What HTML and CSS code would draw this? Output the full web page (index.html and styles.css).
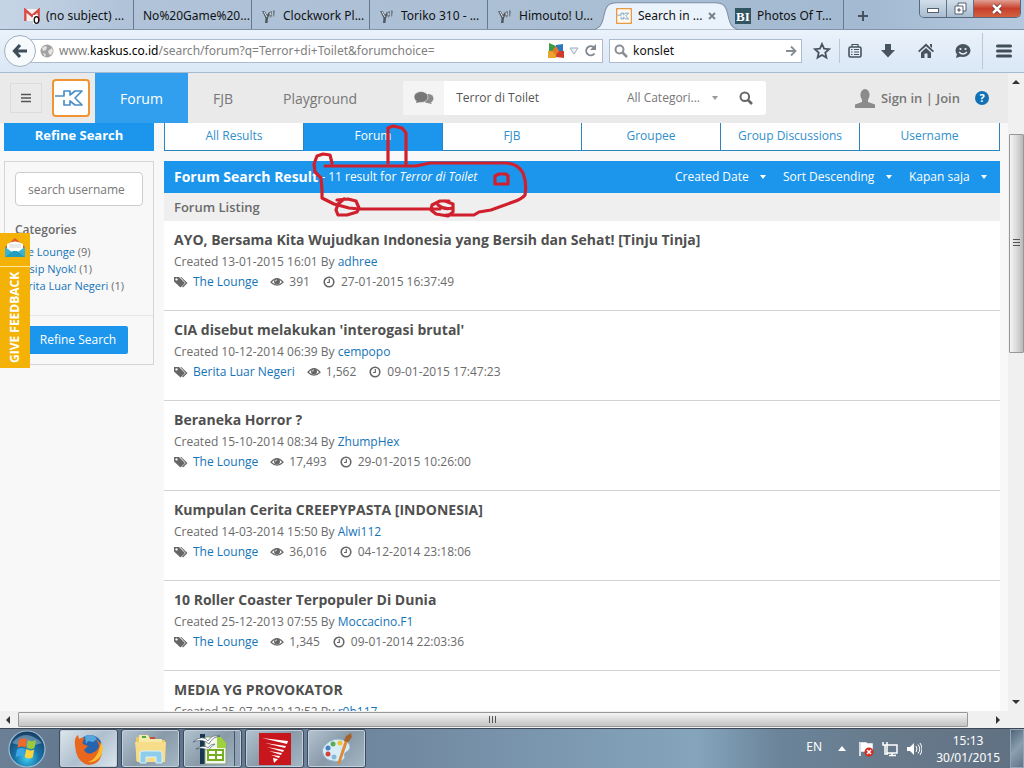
FILE: index.html
```html
<!DOCTYPE html>
<html lang="id">
<head>
<meta charset="utf-8">
<title>Search in Forum</title>
<link rel="stylesheet" href="styles.css">
</head>
<body>
<svg class="defs" aria-hidden="true">
  <symbol id="tags" viewBox="0 0 14 14"><path fill="currentColor" fill-rule="evenodd" d="M0 2h5l6 6-4.500 4.500L0 6.500zM2.500 3.200a1.200 1.200 0 1 0 .01 0zM6.200 2h1L13.500 8 9 12.500l-.9-.9L11.700 8z"/></symbol>
  <symbol id="eye" viewBox="0 0 14 14"><path fill="none" stroke="currentColor" stroke-width="1.200" d="M1 7.200Q7 .2 13 7.200 7 13 1 7.200z"/><circle cx="7" cy="6.600" r="3" fill="currentColor"/><path d="M5.300 6.500Q5.400 5 7 4.900" fill="none" stroke="#fff" stroke-width=".8"/></symbol>
  <symbol id="clock" viewBox="0 0 14 14"><circle cx="7" cy="7" r="4.800" fill="none" stroke="currentColor" stroke-width="1.600"/><path d="M7.300 4v3.500H5" fill="none" stroke="currentColor" stroke-width="1.200"/></symbol>
  <symbol id="flagicon" viewBox="0 0 16 16"><path d="M1 3l3 .5 2 3.500 2-3 1 2-2 4-.5 5H4l.5-5z" fill="#4f5860"/><path d="M8 4l3-1v5l-2 2zM12 2l2 1-1 6-1-1z" fill="#76808a"/><path d="M3 4l3 5M9 5l1 2" stroke="#e2e7ec" stroke-width="1"/></symbol>
  <symbol id="klogo" viewBox="0 0 38 38"><path d="M3 17h9v-5h6v4l5-4h7l-7 7 7 7h-7l-5-4v4h-6v-5" fill="none" stroke="#4a8fc7" stroke-width="1.700" stroke-linejoin="round"/></symbol>
</svg>

<div class="tabstrip">
  <button class="tab"><svg class="fav" viewBox="0 0 16 16"><path d="M0 1h16v12H0z" fill="#f4eeee"/><path d="M1.300 13V2L8 8l6.700-6v11" fill="none" stroke="#d84a43" stroke-width="2.400"/><path d="M9 7h5v9H9z" fill="#fff"/><ellipse cx="12.500" cy="12" rx="2.300" ry="3.300" fill="#fff" stroke="#111" stroke-width="1.300"/></svg><span>(no subject) ...</span></button>
  <button class="tab"><span>No%20Game%20...</span></button>
  <button class="tab"><svg class="fav"><use href="#flagicon"/></svg><span>Clockwork Pl...</span></button>
  <button class="tab"><svg class="fav"><use href="#flagicon"/></svg><span>Toriko 310 - ...</span></button>
  <button class="tab nosep"><svg class="fav"><use href="#flagicon"/></svg><span>Himouto! U...</span></button>
  <button class="tab active">
    <svg class="tabshape" viewBox="0 0 148 30" preserveAspectRatio="none"><path d="M0 30C8 29 10 25 12 17S16 6 25 6H123C132 6 134 9 136 17S140 29 148 30z" fill="#eaf2fb" stroke="#7e8fa4"/></svg>
    <svg class="fav" viewBox="0 0 38 38"><rect x="1" y="1" width="36" height="36" rx="4" fill="#fff8ee" stroke="#e99a45" stroke-width="4"/><use href="#klogo"/></svg><span>Search in ...</span><svg class="tabclose" viewBox="0 0 8 8"><path d="M1 1l6 6M7 1L1 7" stroke="#7a828c" stroke-width="2"/></svg></button>
  <button class="tab"><svg class="fav" viewBox="0 0 16 16"><path fill="#315463" d="M0 0h16v16H0z"/><text class="bi" x="1" y="13">BI</text></svg><span>Photos Of T...</span></button>
  <button class="newtab" aria-label="New tab"><svg width="12" height="12"><path d="M6 1v10M1 6h10" stroke="#46525f" stroke-width="2"/></svg></button>
  <div class="winctl">
    <button aria-label="Minimize"><svg width="12" height="12"><rect x=".5" y="5.500" width="11" height="4" fill="#fff" stroke="#526070"/></svg></button>
    <button aria-label="Restore"><svg width="13" height="13"><path d="M4 1h8v8H4z" fill="#fff" stroke="#526070"/><path d="M1 4h8v8H1z" fill="#fff" stroke="#526070"/><path d="M4 7h2v2H4z" fill="#bccada" stroke="#526070"/></svg></button>
    <button class="close" aria-label="Close"><svg width="14" height="12"><path d="M3 2l8 8M11 2l-8 8" stroke="#6b2a2a" stroke-width="4"/><path d="M3 2l8 8M11 2l-8 8" stroke="#fff" stroke-width="2.500"/></svg></button>
  </div>
</div>

<div class="navbar">
  <button class="back" aria-label="Back"><svg width="16" height="16"><path d="M8 2L2.500 8 8 14M3 8h12" fill="none" stroke="#3f4c59" stroke-width="3.200"/></svg></button>
  <div class="urlbox">
    <svg width="14" height="14"><circle cx="7" cy="7" r="6.500" fill="#a2a2a2"/><path d="M2 4l3-2 2 1-1 3-3 1zM8 7l4-3 1 3-2 4-2-1zM3 9l3 1-1 3z" fill="#e4e4e4"/></svg>
    <div class="url" role="textbox" aria-label="Address" contenteditable="true" spellcheck="false">www.<b>kaskus.co.id</b>/search/forum?q=Terror+di+Toilet&amp;forumchoice=</div>
    <svg width="16" height="16"><path d="M1 0l7 3v5H1z" fill="#3d9b48"/><path d="M8 2l7-1v7H8z" fill="#2a78bf"/><path d="M0 8h8v7H0z" fill="#e9a52c"/><path d="M8 8h8v7l-8-1z" fill="#cf3c29"/><path d="M4 8l4-5 3 5-3 4z" fill="#e8792c"/></svg>
    <svg class="drop" width="10" height="8"><path d="M1 1h8L5 7z" fill="#eef3fa" stroke="#9fabba"/></svg>
    <button aria-label="Reload"><svg width="13" height="13"><path d="M10.500 9.500A4.600 4.600 0 1 1 9.500 3" fill="none" stroke="#808891" stroke-width="2"/><path d="M12 0v6H6z" fill="#808891"/></svg></button>
  </div>
  <div class="searchbox">
    <svg width="14" height="14"><circle cx="5.500" cy="5.500" r="4" fill="none" stroke="#8a8f95" stroke-width="2"/><path d="M8.500 8.500l4.500 4.500" stroke="#8a8f95" stroke-width="2.500"/></svg>
    <input type="text" aria-label="Web search" value="konslet">
    <button aria-label="Go"><svg width="12" height="12"><path d="M1 6h9M6 1.500L10.500 6 6 10.500" fill="none" stroke="#858c94" stroke-width="1.800"/></svg></button>
  </div>
  <div class="tools">
    <button class="star" aria-label="Bookmark"><svg width="18" height="18"><path d="M9 2l2.100 4.700 5 .5-3.800 3.400 1.100 5L9 13l-4.400 2.600 1.100-5L1.900 7.200l5-.5z" fill="none" stroke="#47535f" stroke-width="1.800"/></svg></button>
    <button class="list" aria-label="Bookmarks list"><svg width="16" height="18"><rect x="2" y="5" width="12" height="10" rx="1.500" fill="none" stroke="#47535f" stroke-width="1.600"/><path d="M5 5V2.500h6V5M4 7.500h1.500M7 7.500h5M4 10h1.500M7 10h5M4 12.500h1.500M7 12.500h5" fill="none" stroke="#47535f" stroke-width="1.200"/></svg></button>
    <button aria-label="Downloads"><svg width="16" height="18"><path d="M5 2h6v6h4l-7 7.500L1 8h4z" fill="#47535f"/></svg></button>
    <button aria-label="Home"><svg width="18" height="18"><path d="M9 1.500L17 9l-1.200 1.300L9 4.200l-6.800 6.100L1 9z" fill="#47535f"/><path d="M9 6l5 4.500V16h-3.500v-4.500h-3V16H4v-5.500z" fill="#47535f"/><path d="M13 2h2v4l-2-1.700z" fill="#47535f"/></svg></button>
    <button aria-label="Chat"><svg width="18" height="18"><ellipse cx="9" cy="8.500" rx="7.500" ry="6.500" fill="#47535f"/><path d="M3 12l-1 4 6-2z" fill="#47535f"/><circle cx="6.500" cy="7" r="1.100" fill="#e5eef8"/><circle cx="11.500" cy="7" r="1.100" fill="#e5eef8"/><path d="M5 10q4 4 8 0" fill="none" stroke="#e5eef8" stroke-width="1.300"/></svg></button>
    <button class="menu" aria-label="Menu"><svg width="16" height="14"><path d="M1.500 2h13M1.500 7h13M1.500 12h13" stroke="#414d59" stroke-width="3" stroke-linecap="round"/></svg></button>
  </div>
</div>

<div class="viewport">
  <div class="page">
    <header class="site">
      <button class="burger" aria-label="Menu"><svg width="10" height="10"><path d="M0 1.500h10M0 5h10M0 8.500h10" stroke="#555" stroke-width="1.400"/></svg></button>
      <a class="logo" href="#" aria-label="Home"><svg width="34" height="34" viewBox="2 2 34 34"><use href="#klogo" width="38" height="38"/></svg></a>
      <nav class="mainnav"><a class="on" href="#">Forum</a><a href="#">FJB</a><a href="#">Playground</a></nav>
      <form class="sitesearch">
        <span class="chat"><svg width="20" height="14"><ellipse cx="14" cy="7.500" rx="5.500" ry="4.500" fill="#8a8a8a"/><path d="M16 10l2 3-5-1z" fill="#8a8a8a"/><ellipse cx="7" cy="6" rx="7" ry="5.500" fill="#777" stroke="#f4f4f4" stroke-width=".6"/><path d="M3 9l-1 3 4-1z" fill="#777"/></svg></span>
        <input type="text" aria-label="Search" value="Terror di Toilet">
        <span class="pick"><select aria-label="Category"><option>All Categori...</option></select></span>
        <button type="button" aria-label="Search"><svg width="14" height="14"><circle cx="5.800" cy="5.800" r="4.300" fill="none" stroke="#666" stroke-width="2"/><path d="M9 9l4 4" stroke="#666" stroke-width="2.500"/></svg></button>
      </form>
      <div class="account"><svg width="22" height="19"><ellipse cx="11" cy="6" rx="4.600" ry="6" fill="#8b8b8b"/><path d="M8 9h6v4l7 2.500V19H1v-3.500L8 13z" fill="#8b8b8b"/></svg><a href="#">Sign in | Join</a></div>
      <a class="help" href="#" aria-label="Help"><svg width="14" height="14"><circle cx="7" cy="7" r="7" fill="#1271b5"/><text x="7" y="11" text-anchor="middle">?</text></svg></a>
    </header>

    <div class="cols">
      <aside class="side">
        <h2 class="sidehead">Refine Search</h2>
        <form class="refine">
          <div class="filters">
            <input type="text" aria-label="Username" placeholder="search username">
            <h3>Categories</h3>
            <ul>
              <li><a href="#">The Lounge</a> (9)</li>
              <li><a href="#">Gosip Nyok!</a> (1)</li>
              <li><a href="#">Berita Luar Negeri</a> (1)</li>
            </ul>
          </div>
          <div class="submit"><button type="button">Refine Search</button></div>
        </form>
      </aside>
      <main class="main">
        <nav class="kinds"><a href="#">All Results</a><a class="on" href="#">Forum</a><a href="#">FJB</a><a href="#">Groupee</a><a href="#">Group Discussions</a><a href="#">Username</a></nav>
        <div class="resulthead">
          <h1>Forum Search Result</h1><p>- 11 result for <i>Terror di Toilet</i></p>
          <div class="sorts">
            <span class="pick"><select aria-label="Sort by"><option>Created Date</option></select></span>
            <span class="pick"><select aria-label="Order"><option>Sort Descending</option></select></span>
            <span class="pick"><select aria-label="Period"><option>Kapan saja</option></select></span>
          </div>
        </div>
        <h2 class="listing">Forum Listing</h2>
        <article><h3>AYO, Bersama Kita Wujudkan Indonesia yang Bersih dan Sehat! [Tinju Tinja]</h3><p>Created 13-01-2015 16:01 By <a href="#">adhree</a></p><div class="meta"><svg><use href="#tags"/></svg><a href="#">The Lounge</a><svg><use href="#eye"/></svg><span>391</span><svg><use href="#clock"/></svg><span>27-01-2015 16:37:49</span></div></article>
        <article><h3>CIA disebut melakukan 'interogasi brutal'</h3><p>Created 10-12-2014 06:39 By <a href="#">cempopo</a></p><div class="meta"><svg><use href="#tags"/></svg><a href="#">Berita Luar Negeri</a><svg><use href="#eye"/></svg><span>1,562</span><svg><use href="#clock"/></svg><span>09-01-2015 17:47:23</span></div></article>
        <article><h3>Beraneka Horror ?</h3><p>Created 15-10-2014 08:34 By <a href="#">ZhumpHex</a></p><div class="meta"><svg><use href="#tags"/></svg><a href="#">The Lounge</a><svg><use href="#eye"/></svg><span>17,493</span><svg><use href="#clock"/></svg><span>29-01-2015 10:26:00</span></div></article>
        <article><h3>Kumpulan Cerita CREEPYPASTA [INDONESIA]</h3><p>Created 14-03-2014 15:50 By <a href="#">Alwi112</a></p><div class="meta"><svg><use href="#tags"/></svg><a href="#">The Lounge</a><svg><use href="#eye"/></svg><span>36,016</span><svg><use href="#clock"/></svg><span>04-12-2014 23:18:06</span></div></article>
        <article><h3>10 Roller Coaster Terpopuler Di Dunia</h3><p>Created 25-12-2013 07:55 By <a href="#">Moccacino.F1</a></p><div class="meta"><svg><use href="#tags"/></svg><a href="#">The Lounge</a><svg><use href="#eye"/></svg><span>1,345</span><svg><use href="#clock"/></svg><span>09-01-2014 22:03:36</span></div></article>
        <article><h3>MEDIA YG PROVOKATOR</h3><p>Created 25-07-2013 12:52 By <a href="#">r0b117</a></p></article>
      </main>
    </div>

    <button class="feedback"><svg width="20" height="22"><path d="M0 9l10-9 10 9v10H0z" fill="#e05a2b"/><path d="M2 6q8-5 16 0v8H2z" fill="#fff"/><path d="M4 7h12M4 9h12" stroke="#d3d3d3"/><path d="M0 9l10 7 10-7v10H0z" fill="#39b4d3"/><path d="M0 19l8-6h4l8 6z" fill="#279dbd"/></svg><span>GIVE FEEDBACK</span></button>

    <svg class="scribble" width="220" height="96" viewBox="308 124 220 96" fill="none" stroke="#d0202e" stroke-width="3.200" stroke-linejoin="round" stroke-linecap="round">
      <path d="M388 163V128l5-2 9 2 4 5v31"/>
      <path d="M325 166h91l14-3h76q12 1 17 10 4 10 2 22-3 4-12 7l-22 8-12 2-5 3h-28M440 209h-81l-10-1-15-4-12-6v-8l-1-12-6-6-1-8 3-8 6-2 7 1 2 8"/>
      <path d="M337 200l11-1 8 2 3 7-2 4-10 3h-9l-2-5 2-6 6-5"/>
      <path d="M449 201h-9l-8 4-1 5 5 4 12 2 5-4v-8l-8-3M438 205q6 5 14 3"/>
      <path d="M495 184v-8l4-2h7l2 2v8z"/>
    </svg>
  </div>
  <div class="vscroll"><i class="up"></i><div class="vthumb"><i></i></div><i class="down"></i></div>
</div>
<div class="hscroll"><i class="left"></i><div class="hthumb"><i></i></div><i class="right"></i><span class="corner"></span></div>

<footer class="taskbar">
  <button class="orb" aria-label="Start"><svg width="40" height="40"><defs><radialGradient id="og" cx=".5" cy=".75" r=".75"><stop offset="0" stop-color="#3fd0f2"/><stop offset=".45" stop-color="#1872a8"/><stop offset="1" stop-color="#173b5e"/></radialGradient></defs><circle cx="20" cy="20" r="18" fill="url(#og)" stroke="#9bbad0" stroke-width="1.200"/><path d="M5 14Q18-2 35 14 20 20 5 14z" fill="#fff" opacity=".3"/><path d="M12 11q4-3 8-.5l-1.500 8q-4-2-8 .5z" fill="#f0692c"/><path d="M21 11q4 2.500 8 0l-1.500 8q-4 2-8-.5z" fill="#9bc93b"/><path d="M10 20.500q4-2.500 8-.5l-1.500 8q-4-2-8 .5z" fill="#3ca7e4"/><path d="M19.200 20q4 2.500 8 .5l-1.500 8q-4 2-8-.5z" fill="#fcd33c"/></svg></button>
  <button class="task bright" aria-label="Firefox"><svg width="32" height="32"><circle cx="17" cy="14" r="12" fill="#2764ae"/><path d="M12 3q8-3 12 3l-4 3-5-1-2 3z" fill="#52a7dd"/><path d="M2 12Q1 5 5 2l1 4q3-2 6-1-3 3-2 6l5 2-4 4q3 5 8 3 6-2 7-7-1-5-4-7 7 3 7 11 0 14-13 15Q3 30 2 12z" fill="#e8661e"/><path d="M28 9q4 8-1 15-5 6-12 5 10-3 13-20z" fill="#fbbf34"/></svg></button>
  <button class="task" aria-label="Explorer"><svg width="34" height="32"><path d="M2 4h9l2 3h18v21H2z" fill="#e8c967"/><path d="M5 2h9l2 4h12v6H5z" fill="#f7e9a8"/><path d="M8 3h4v2H8z" fill="#4caa4c"/><path d="M16 4h5v2h-5z" fill="#c54b3b"/><path d="M1 9h31l-1 20H3z" fill="#f7dd8a"/><path d="M6 30V21q0-3 3-3h16q3 0 3 3v9h-6v-6H12v6z" fill="#8fcdec" stroke="#d9f1fc"/></svg></button>
  <button class="task stack" aria-label="OpenOffice"><svg width="36" height="34"><path d="M8 2h5v30H8z" fill="#183650"/><path d="M13 5h15l6 6v21H13z" fill="#f4f8ef" stroke="#8aa37d"/><path d="M25 5h4l5 6v5h-9z" fill="#9fd13c"/><path d="M1 10q10-8 15-1 4-7 12-5-8 1-11 8-6-6-16-2zM4 17q8-5 12-1 2-4 7-4-5 3-7 7-4-4-12-2z" fill="#fff" stroke="#33495b" stroke-width=".6"/><path d="M15 17h17v12H15z" fill="#77ad20"/><path d="M17 19h6v3h-6zM25 19h5v3h-5zM17 24h6v3h-6zM25 24h5v3h-5z" fill="#fff"/></svg></button>
  <button class="task" aria-label="Shaker"><svg width="32" height="32"><path d="M0 0h32v32H0z" fill="#c8161d"/><path d="M3 5l26 3-1 3zM6 10l21 3-1 2zM8 14l17 3-1 2zM10 18l13 2-1 2zM12 22l9 1-1 2zM14 25l5 1-4 4z" fill="#fff"/></svg></button>
  <button class="task" aria-label="Paint"><svg width="34" height="34"><path d="M4 14Q14 3 26 9q7 5 2 10-5 2-3 6-2 6-12 4-8-1-10-7-2-4 1-8z" fill="#d9edf8" stroke="#8cb0c8"/><circle cx="8" cy="16" r="2.500" fill="#4a81c4"/><circle cx="13" cy="12" r="2.500" fill="#5cab50"/><circle cx="20" cy="11" r="2.500" fill="#f1c232"/><circle cx="8" cy="22" r="2.500" fill="#d0453a"/><circle cx="14" cy="25" r="2.500" fill="#83bad9"/><path d="M17 32L25 8l3 1-8 23z" fill="#dc8b3b"/><path d="M24 9l2-5 5-3 1 4-4 5z" fill="#a4632b"/></svg></button>
  <div class="tray">
    <span>EN</span>
    <svg width="8" height="5"><path d="M4 0l4 5H0z" fill="#fff"/></svg>
    <svg width="16" height="16"><path d="M2 1v14M3 2h5l1 1h5v7H3" fill="#fff" stroke="#fff" stroke-width="1.500"/><circle cx="11" cy="11" r="4.500" fill="#d42c20"/><path d="M9 9l4 4M13 9l-4 4" stroke="#fff" stroke-width="1.500"/></svg>
    <svg width="16" height="16"><path d="M5 4h10v8H5zM7 14.500h7M10 12v2M1 1v3h4V1M3 4v9h3" fill="none" stroke="#fff" stroke-width="1.500"/></svg>
    <svg width="16" height="16"><path d="M1 6h3l4-4v12l-4-4H1z" fill="#fff"/><path d="M10 5q2 3 0 6M12 3.500q3.500 4.500 0 9M14 2q4 6 0 12" fill="none" stroke="#fff"/></svg>
    <time>15:13<br>30/01/2015</time>
  </div>
  <button class="showdesk" aria-label="Show desktop"></button>
</footer>
</body>
</html>
```
FILE: styles.css
```css
* { box-sizing: border-box; }
body { margin: 0; height: 100vh; display: flex; flex-direction: column; overflow: hidden; font: 13px/20px "Open Sans", sans-serif; color: #6b6b6b; background: #f8f8f8; }
button, input, select { font: inherit; color: inherit; border: 0; margin: 0; padding: 0; background: none; }
a { color: #1474b8; text-decoration: none; }
h1, h2, h3, p, ul { margin: 0; padding: 0; list-style: none; }
svg { display: block; flex: none; }
.defs { position: absolute; width: 0; height: 0; }

.tabstrip { flex: none; display: flex; height: 30px; padding-left: 15px; background: linear-gradient(90deg, #c6d5e6, #b0c3d9 12%, #a9bdd3 60%, #a3bad2 85%, #b5c9de); border-bottom: 1px solid #8293a8; font: 12px/16px "Noto Sans", sans-serif; color: #111; }
.tab { position: relative; flex: 0 1 118px; display: flex; align-items: center; gap: 6px; padding: 2px 0 0 9px; border-right: 1px solid #64788e; white-space: nowrap; }
.tab:first-child, .tab.nosep, .tab.active { flex-basis: 119px; }
.tab:not(.active) { overflow: hidden; }
.tab.nosep, .tab.active { border-right-color: transparent; }
.tab.active { z-index: 1; height: 30px; }
.tab > * { position: relative; }
.tab .tabshape { position: absolute; left: -15px; top: -4px; width: 148px; height: 34px; }
.fav { width: 16px; height: 16px; }
.tabclose { width: 8px; height: 8px; }
.bi { font: bold 13px "Liberation Serif", serif; fill: #fff; }
.newtab { padding: 2px 13px 0; }
.winctl { display: flex; height: 18px; margin: 0 3px 0 auto; border: 1px solid #56687e; border-top: 0; border-radius: 0 0 5px 5px; overflow: hidden; }
.winctl button { width: 27px; display: grid; place-items: center; background: linear-gradient(#d2deea, #a9bccf); border-right: 1px solid #5f7187; }
.winctl .close { width: 46px; border: 0; background: linear-gradient(#e0a093, #c8402b 50%, #d2603f); }

.navbar { flex: none; display: flex; align-items: center; height: 43px; padding: 0 0 1px 4px; background: linear-gradient(#eaf2fb, #dae7f5); border-bottom: 1px solid #a5b9d0; font: 12px/16px "Noto Sans", sans-serif; color: #111; }
.back { z-index: 1; width: 32px; height: 32px; margin-right: -6px; display: grid; place-items: center; border: 1px solid #a0aebf; border-radius: 50%; background: #f7fafd; }
.urlbox, .searchbox { display: flex; align-items: center; height: 24px; border: 1px solid #acbccd; background: #fff; }
.urlbox { flex: 1; padding: 0 5px 0 9px; gap: 5px; }
.url { flex: 1; min-width: 0; overflow: hidden; white-space: nowrap; color: #808080; outline: 0; }
.url b { font-weight: 400; color: #000; }
.searchbox { width: 193px; margin-left: 6px; padding: 0 4px; gap: 5px; }
.searchbox input { flex: 1; min-width: 0; }
.tools { display: flex; width: 219px; margin-left: 3px; align-items: center; }
.tools button { flex: 1; display: grid; place-items: center; height: 24px; }
.tools .star { flex: 0 0 34px; }
.tools .list { flex: 0 0 30px; border-left: 1px solid #b9c7d7; }
.tools .menu { flex: 0 0 42px; height: 36px; border-left: 1px solid #b9c7d7; }

.viewport { flex: 1; min-height: 0; display: flex; }
.page { position: relative; flex: 1; min-width: 0; overflow: hidden; background: #f8f8f8; }
.site { display: flex; align-items: center; height: 50px; padding-left: 10px; background: #eaeaea; color: #777; }
.burger { width: 32px; height: 30px; display: grid; place-items: center; border: 1px solid #dcdcdc; }
.logo { margin: 0 5px 0 10px; border: 2px solid #f09433; border-radius: 4px; background: #fff; }
.mainnav { display: flex; font: 500 14px/52px "Open Sans", sans-serif; height: 50px; }
.mainnav a { height: 50px; padding: 0 25px; color: #777; }
.mainnav .on { background: #319fee; color: #fff; }
.mainnav a:last-child { padding-right: 46px; }
.sitesearch { flex: 1; display: flex; align-items: center; height: 34px; border-radius: 3px; background: #fff; overflow: hidden; font-size: 12px; }
.sitesearch .chat { width: 41px; height: 34px; display: grid; place-items: center; background: #f4f4f4; }
.sitesearch input { flex: 1; min-width: 0; padding-left: 12px; color: #555; }
.sitesearch button { width: 40px; display: grid; place-items: center; }
.pick { display: flex; align-items: center; gap: 11px; }
.pick select { appearance: none; outline: 0; }
.pick::after { content: ""; border: 3px solid transparent; border-top: 4px solid currentColor; border-bottom: 0; }
.sitesearch .pick::after { color: #999; margin-right: 8px; }
.account { display: flex; align-items: center; gap: 5px; margin-left: 88px; }
.account a { color: #777; font-weight: 600; }
.help { margin: 0 19px 0 15px; }
.help text { font: bold 11px "Open Sans", sans-serif; fill: #fff; }

.cols { display: flex; gap: 10px; padding: 0 8px 0 4px; }
.side { flex: 0 0 150px; }
.sidehead { height: 28px; margin-bottom: 10px; background: #1c96ec; color: #fff; font: bold 13px/25px "Open Sans", sans-serif; text-align: center; }
.refine { border: 1px solid #d5d5d5; }
.filters { height: 153px; padding: 10px; font-size: 11px; line-height: 17px; }
.filters input { width: 100%; height: 34px; padding: 0 12px; border: 1px solid #ccc; border-radius: 4px; background: #fff; font-size: 12px; }
.filters input::placeholder { color: #777; }
.filters h3 { margin: 14px 0 3px; font: 600 12px/20px "Open Sans", sans-serif; }
.submit { padding: 10px 23px; border-top: 1px solid #e5e5e5; }
.submit button { width: 100px; height: 28px; border-radius: 2px; background: #1c96ec; color: #fff; font-size: 12px; }
.main { flex: 1; min-width: 0; }
.kinds { display: grid; grid-template-columns: repeat(6, 1fr); height: 28px; margin-bottom: 10px; background: #fff; border: 1px solid #2d85c0; border-top: 0; font-size: 12px; line-height: 25px; text-align: center; }
.kinds a { border-right: 1px solid #2d85c0; color: #318fca; white-space: nowrap; }
.kinds a:last-child { border: 0; }
.kinds .on { margin-bottom: -1px; background: #1c96ec; color: #fff; }
.resulthead { display: flex; align-items: center; height: 32px; padding: 0 13px 0 10px; background: #1c96ec; color: #fff; font-size: 12px; white-space: nowrap; }
.resulthead h1 { margin-right: 3px; font: bold 14px/20px "Open Sans", sans-serif; }
.sorts { display: flex; gap: 17px; margin-left: auto; }
.listing { height: 28px; padding-left: 10px; background: #efefef; font: 600 13px/28px "Open Sans", sans-serif; }
article { padding: 9px 10px 18px; background: #fff; border-bottom: 1px solid #d2d2d2; font-size: 12px; }
article h3 { margin-bottom: 2px; color: #505050; font: bold 14px/20px "Open Sans", sans-serif; }
.meta { display: flex; align-items: center; }
.meta svg { width: 14px; height: 14px; margin-right: 5px; color: #666; }
.meta a, .meta span { margin-right: 12px; }

.feedback { position: absolute; left: 0; top: 160px; width: 30px; height: 135px; display: flex; flex-direction: column; align-items: center; gap: 6px; padding-top: 5px; background: #f4b206; color: #fff; font: bold 12px/30px "Open Sans", sans-serif; }
.feedback span { width: 30px; height: 102px; writing-mode: vertical-rl; transform: rotate(180deg); border-bottom: 1px solid #fbe6a0; text-align: center; }
.scribble { position: absolute; left: 308px; top: 51px; }

.vscroll { flex: 0 0 16px; display: flex; flex-direction: column; align-items: center; padding: 7px 0; background: #f0f0f0; }
.vthumb { width: 15px; height: 219px; margin: 50px 0 auto; display: grid; place-items: center; border: 1px solid #979797; border-radius: 1px; background: linear-gradient(90deg, #f4f4f4, #d8d8d8 55%, #b8b8bc); }
.vthumb i { width: 7px; height: 9px; background: repeating-linear-gradient(#555 0 1px, transparent 1px 3px); }
.vscroll > i, .hscroll > i { border: 4px solid transparent; }
.vscroll .up { border-bottom-color: #333; border-top: 0; }
.vscroll .down { border-top-color: #333; border-bottom: 0; }
.hscroll { flex: none; height: 17px; display: flex; align-items: center; background: #f0f0f0; padding-left: 6px; }
.hscroll .left { border-right-color: #333; border-left: 0; margin-right: 8px; }
.hscroll .right { border-left-color: #333; border-right: 0; margin: 0 8px 0 28px; }
.hthumb { flex: 1; height: 15px; display: grid; place-items: center; border: 1px solid #979797; border-radius: 1px; background: linear-gradient(#f4f4f4, #d8d8d8 55%, #c4c4c6); }
.hthumb i { width: 9px; height: 7px; background: repeating-linear-gradient(90deg, #555 0 1px, transparent 1px 3px); }
.corner { width: 16px; height: 17px; }

.taskbar { flex: none; display: flex; align-items: center; gap: 3px; height: 40px; padding-left: 7px; border-top: 1px solid #3c4858; background: linear-gradient(90deg, #6b7f95 0, #5d7189 12%, #7088a0 38%, #85a5bd 68%, #6b849a 76%, #67798a 88%, #5f7083); color: #fff; }
.orb { width: 40px; margin-right: 9px; }
.task { width: 59px; height: 39px; display: grid; place-items: center; border: 1px solid #3d4b5c; border-radius: 3px; background: linear-gradient(135deg, #b4c4d1, #8899a8 50%, #a5b8c6); box-shadow: inset 0 0 0 1px #c3d0da; }
.task.bright { background: linear-gradient(135deg, #dde7ed, #aebfcd 50%, #dce7ee); }
.task.stack { box-shadow: inset 0 0 0 1px #c3d0da, inset -6px 0 0 #8fa1b2, inset -7px 0 0 #46566a; padding-right: 6px; }
.tray { display: flex; align-items: center; gap: 8px; margin-left: auto; font: 12px/17px "Noto Sans", sans-serif; text-align: center; }
.tray span { margin: 0 8px 5px 0; }
.tray svg:nth-of-type(1) { margin-right: 4px; }
.tray time { margin: 0 7px 0 6px; }
.showdesk { width: 14px; height: 39px; border: 1px solid #93a5b6; background: linear-gradient(135deg, #51657a, #8b9fb1 50%, #61758a); }
```
